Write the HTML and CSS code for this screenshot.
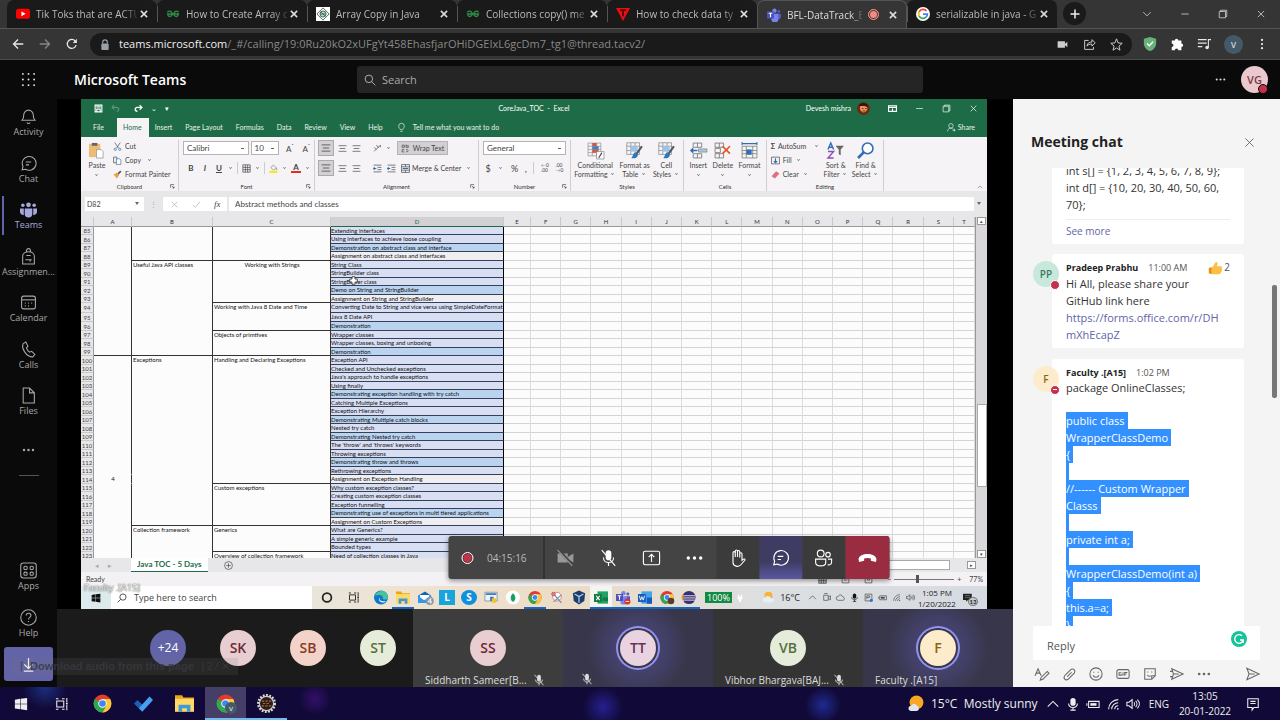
FILE: index.html
```html
<!DOCTYPE html>
<html lang="en">
<head>
<meta charset="utf-8">
<title>Microsoft Teams</title>
<link rel="stylesheet" href="styles.css">
</head>
<body>
<svg class="sprite" aria-hidden="true">
  <symbol id="x" viewBox="0 0 16 16"><path d="M3 3l10 10M13 3L3 13"/></symbol>
  <symbol id="chev" viewBox="0 0 16 16"><path d="M2 5l6 6 6-6"/></symbol>
  <symbol id="up" viewBox="0 0 16 16"><path d="M2 11l6-6 6 6"/></symbol>
  <symbol id="restore" viewBox="0 0 16 16"><path d="M2 4h10v10H2zM4 4V2h10v10h-2"/></symbol>
  <symbol id="min" viewBox="0 0 16 16"><path d="M2 8h12"/></symbol>
  <symbol id="dots" viewBox="0 0 16 16"><g class="solid"><circle cx="2.500" cy="8" r="1.500"/><circle cx="8" cy="8" r="1.500"/><circle cx="13.500" cy="8" r="1.500"/></g></symbol>
  <symbol id="micoff" viewBox="0 0 16 16"><rect class="solid" x="5.500" y="1" width="5" height="9" rx="2.500"/><path d="M3.500 7.500c0 6 9 6 9 0M8 12v3M2 1l12 14"/></symbol>
  <symbol id="mic" viewBox="0 0 16 16"><rect class="solid" x="5" y="1" width="6" height="9" rx="3"/><path d="M3 7.500c0 6 10 6 10 0M8 12v3M5 15h6"/></symbol>
  <symbol id="chat" viewBox="0 0 16 16"><path d="M2 14l.8-3.200A6.500 6.500 0 1 1 5.200 13.400zM5.500 6.600h5M5.500 9.300h3"/></symbol>
  <symbol id="search" viewBox="0 0 16 16"><circle cx="6.500" cy="6.500" r="5"/><path d="M10.200 10.200L15 15"/></symbol>
  <symbol id="wifi" viewBox="0 0 16 16"><path d="M3 14C3 8 8 3 14 3M6.500 14c0-4 3.500-7.500 7.500-7.500M10 14c0-2.200 1.800-4 4-4"/><circle class="solid" cx="13.500" cy="13.500" r="1"/></symbol>
  <symbol id="speaker" viewBox="0 0 16 16"><path d="M1 6h2.500L7 3v10L3.500 10H1zM9 6c1 1 1 3 0 4M11 4.500c2 2 2 5 0 7M13 3c3 3 3 7 0 10"/></symbol>
  <symbol id="battery" viewBox="0 0 16 16"><path d="M3 5h12v7H3zM1 7v3"/><path class="solid" d="M5 7h7v3H5z"/></symbol>
  <symbol id="taskview" viewBox="0 0 16 16"><path d="M2 4.500h8v7H2zM1 2h3M1 14h3M8 2h3M8 14h3M13.500 1v5M13.500 9v6"/><path class="solid" d="M12.500 6.500h2v2h-2z"/></symbol>
  <symbol id="win" viewBox="0 0 16 16"><path class="solid" d="M1 3l6-.9v5.500H1zM7.600 2L15 1v6.600H7.600zM1 8.300h6v5.600L1 13zM7.600 8.300H15V15l-7.400-1z"/></symbol>
  <symbol id="chrome" viewBox="0 0 16 16"><circle cx="8" cy="8" r="7.500" fill="#e33b2e"/><path fill="#2da94f" d="M1.500 4.300A7.500 7.500 0 0 0 8 15.500l3.300-5.600z"/><path fill="#fcc934" d="M8 15.500a7.500 7.500 0 0 0 6.500-11.200H8l3.300 5.600z"/><circle cx="8" cy="8" r="3.600" fill="#fff"/><circle cx="8" cy="8" r="2.800" fill="#4285f4"/></symbol>
  <symbol id="folder" viewBox="0 0 16 16"><path fill="#e8a713" d="M0 1h6l1 2h9v3H0z"/><path fill="#ffd868" d="M0 4h16v11H0z"/><path fill="#3f9ad6" d="M3 9h10v6h-3v-3H6v3H3z"/></symbol>
  <symbol id="teams" viewBox="0 0 16 16"><circle cx="8.500" cy="3" r="2.500" fill="#7b83eb"/><circle cx="13.500" cy="4" r="1.700" fill="#5059c9"/><path fill="#5059c9" d="M10 6.500h6v4a3 3 0 0 1-4 2z"/><path fill="#7b83eb" d="M5 6.500h8V12a4 4 0 0 1-8 1z"/><path fill="#4b53bc" d="M0 4h8v8H0z"/><path fill="#fff" d="M2 5.500h4v1.200H4.600v4H3.400v-4H2z"/></symbol>
  <symbol id="gfg" viewBox="0 0 16 8"><path d="M1 4h14M1.500 2C4-.5 7 1 7 4s-4 4-5 1M14.500 2C12-.5 9 1 9 4s4 4 5 1" fill="none" stroke="#2f8d46" stroke-width="1.600"/></symbol>
  <symbol id="grid" viewBox="0 0 16 16"><path d="M1.500 1.500h13v13h-13zM1.500 6h13M1.500 10h13M6 1.500v13M10 1.500v13"/></symbol>
  <symbol id="lines" viewBox="0 0 16 16"><path d="M1 3h14M3 8h10M1 13h14"/></symbol>
  <symbol id="indent" viewBox="0 0 16 16"><path d="M1 2h14M8 6h7M8 10h7M1 14h14"/><path stroke="#2f6db5" stroke-width="2" d="M6 8H1M3 6L1 8l2 2"/></symbol>
  <symbol id="launch" viewBox="0 0 16 16"><path stroke-width="2" d="M2 12V2h11M7 7l6 6M13 8v5H8"/></symbol>
  <symbol id="brush" viewBox="0 0 16 16"><path d="M.7 .7h12v11h-12zM.7 4h12M.7 8h12M4.500 .7v11M8.500 .7v11" fill="none" stroke="#8a8a8a" stroke-width=".7"/><path fill="#9cc3e8" d="M4 4h7v5H4z"/><path d="M15 4l-5 7" stroke="#555" stroke-width="2"/><path fill="#2878c4" d="M10 10c-3-1-3 3-5 5 4 1 7-1 6-4z"/></symbol>
</svg>

<div class="tabs">
  <div class="tab"><svg class="fav" viewBox="0 0 16 16"><rect y="2" width="16" height="11.500" rx="3" fill="#f00"/><path d="M6.200 5v5.500L11 7.800z" fill="#fff"/></svg><span>Tik Toks that are ACTU</span><button aria-label="Close"><svg class="i"><use href="#x"/></svg></button></div>
  <div class="tab"><svg class="fav"><use href="#gfg"/></svg><span>How to Create Array c</span><button aria-label="Close"><svg class="i"><use href="#x"/></svg></button></div>
  <div class="tab"><svg class="fav" viewBox="0 0 16 16"><path d="M0 0h16v16H0z" fill="#fff"/><path d="M8 1l7 7-7 7-7-7z" fill="none" stroke="#36584a"/><circle cx="8" cy="8" r="3.500" fill="#b7d6bd" stroke="#36584a"/><path d="M5 8h6M6 6l4 4" stroke="#36584a"/></svg><span>Array Copy in Java</span><button aria-label="Close"><svg class="i"><use href="#x"/></svg></button></div>
  <div class="tab"><svg class="fav"><use href="#gfg"/></svg><span>Collections copy() me</span><button aria-label="Close"><svg class="i"><use href="#x"/></svg></button></div>
  <div class="tab"><svg class="fav" viewBox="0 0 16 16"><path d="M0 1h16L8 16z" fill="#f20d0d"/><path d="M4.500 3.500h7M8 3.500v7" stroke="#4a0000" stroke-width="2"/></svg><span>How to check data ty</span><button aria-label="Close"><svg class="i"><use href="#x"/></svg></button></div>
  <div class="tab on"><svg class="fav"><use href="#teams"/></svg><span>BFL-DataTrack_B</span><i class="live"></i><button aria-label="Close"><svg class="i"><use href="#x"/></svg></button></div>
  <div class="tab"><svg class="fav" viewBox="0 0 16 16"><circle cx="8" cy="8" r="8" fill="#fff"/><g fill="none" stroke-width="2"><path d="M12 4.600A5 5 0 0 0 3.600 5.600" stroke="#ea4335"/><path d="M3.600 5.600a5 5 0 0 0 0 4.800" stroke="#fbbc05"/><path d="M3.600 10.400a5 5 0 0 0 7.800 1.200" stroke="#34a853"/><path d="M8 8h5a5 5 0 0 1-1.600 3.600" stroke="#4285f4"/></g></svg><span>serializable in java - G</span><button aria-label="Close"><svg class="i"><use href="#x"/></svg></button></div>
  <button class="newtab" aria-label="New tab"><svg class="i" viewBox="0 0 16 16"><path d="M8 2v12M2 8h12"/></svg></button>
  <div class="winctl"><button aria-label="Tabs"><svg class="i"><use href="#chev"/></svg></button><button aria-label="Minimize"><svg class="i"><use href="#min"/></svg></button><button aria-label="Restore"><svg class="i"><use href="#restore"/></svg></button><button aria-label="Close window"><svg class="i"><use href="#x"/></svg></button></div>
</div>

<div class="toolbar">
  <div class="navbtns">
    <button aria-label="Back"><svg class="i" viewBox="0 0 16 16"><path d="M15 8H2M8 2L2 8l6 6"/></svg></button>
    <button class="dim" aria-label="Forward"><svg class="i" viewBox="0 0 16 16"><path d="M1 8h13M8 2l6 6-6 6"/></svg></button>
    <button aria-label="Reload"><svg class="i" viewBox="0 0 16 16"><path d="M13.500 9.500A6 6 0 1 1 12.300 4"/><path class="solid" d="M14.500 1v5.500H9z"/></svg></button>
  </div>
  <div class="url">
    <svg class="lock" viewBox="0 0 10 12"><path d="M2.500 5V3.500a2.500 2.500 0 0 1 5 0V5" fill="none" stroke="#9aa0a6" stroke-width="1.300"/><rect x="1" y="5" width="8" height="7" rx="1" fill="#9aa0a6"/></svg>
    <p><b>teams.microsoft.com</b>/_#/calling/19:0Ru20kO2xUFgYt458EhasfjarOHiDGEIxL6gcDm7_tg1@thread.tacv2/</p>
    <svg class="i" viewBox="0 0 16 16"><path class="solid" d="M2 4h9v3l3-2.500v7L11 9v3H2z"/></svg>
    <svg class="i" viewBox="0 0 16 16"><path d="M7 3H2v11h11v-3M5 10c0-4 3-5 6-5V2l4 4-4 4V7.500C8 7.500 6 8 5 10z"/></svg>
    <svg class="i" viewBox="0 0 16 16"><path d="M8 1l2 5 5 .5-4 3.500 1.300 5L8 12.300 3.700 15 5 10 1 6.500 6 6z"/></svg>
  </div>
  <div class="ext">
    <svg viewBox="0 0 16 16"><path d="M8 0l7 2v5c0 5-4 8-7 9-3-1-7-4-7-9V2z" fill="#67b279"/><path d="M4.500 7.500L7.200 10l4.300-4.500" fill="none" stroke="#fff" stroke-width="1.500"/></svg>
    <svg viewBox="0 0 16 16"><path d="M2 4h3.500a2 2 0 1 1 4 0H13v3.500a2 2 0 1 1 0 4V15H9.500a2 2 0 1 0-4 0H2v-3.500a2 2 0 1 0 0-4z" fill="#fff"/></svg>
    <svg class="i" viewBox="0 0 16 16"><path d="M1 3h10M1 7h10M1 11h5M13 12V3h3"/><circle class="solid" cx="11.500" cy="12" r="2"/></svg>
    <span class="prof">v</span>
    <svg class="i vert"><use href="#dots"/></svg>
  </div>
</div>

<header class="thead">
  <svg class="waffle" viewBox="0 0 16 16"><g fill="#e6e6e6"><circle cx="2" cy="2" r="1"/><circle cx="8" cy="2" r="1"/><circle cx="14" cy="2" r="1"/><circle cx="2" cy="8" r="1"/><circle cx="8" cy="8" r="1"/><circle cx="14" cy="8" r="1"/><circle cx="2" cy="14" r="1"/><circle cx="8" cy="14" r="1"/><circle cx="14" cy="14" r="1"/></g></svg>
  <h1>Microsoft Teams</h1>
  <label class="tsearch"><svg class="i"><use href="#search"/></svg><input type="text" placeholder="Search" aria-label="Search"></label>
  <div class="me"><svg class="i"><use href="#dots"/></svg><span class="av">VG<i></i></span></div>
</header>

<main>
  <nav class="rail">
    <div class="items">
      <a href="#"><svg class="i" viewBox="0 0 16 16"><path d="M2 11.500c1-1 1.500-2 1.500-5a4.500 4.500 0 0 1 9 0c0 3 .5 4 1.500 5zM6.500 13.500c.5 1.500 2.500 1.500 3 0"/></svg>Activity</a>
      <a href="#"><svg class="i"><use href="#chat"/></svg>Chat</a>
      <a href="#" class="cur"><svg viewBox="0 0 18 16"><g fill="#a6a7dc"><circle cx="3" cy="3.500" r="1.900"/><circle cx="9" cy="3" r="2.500"/><circle cx="15" cy="3.500" r="1.900"/><path d="M5 7h8v5.500a4 4 0 0 1-8 0zM0 7h4v7c-2 0-4-1-4-3.500zM14 7h4v3.500c0 2.500-2 3.500-4 3.500z"/></g></svg>Teams</a>
      <a href="#"><svg class="i" viewBox="0 0 16 16"><path d="M2.500 15V8c0-6 11-6 11 0v7zM6 3.500c0-4 4-4 4 0M5 11h6M9.500 11v2M6 7h4"/></svg>Assignmen...</a>
      <a href="#"><svg class="i" viewBox="0 0 16 16"><rect x="1.500" y="2" width="13" height="12" rx="2"/><path d="M1.500 5.500h13"/><g class="solid"><circle cx="5" cy="8.500" r=".6"/><circle cx="8" cy="8.500" r=".6"/><circle cx="11" cy="8.500" r=".6"/><circle cx="5" cy="11.200" r=".6"/><circle cx="8" cy="11.200" r=".6"/></g></svg>Calendar</a>
      <a href="#"><svg class="i" viewBox="0 0 16 16"><path d="M3 2.500L5.500 1l2 4L6 6.500c.5 1.500 1.500 3 3 4l2-.8 3 3-2 2.300C6 15 1 7 3 2.500z"/></svg>Calls</a>
      <a href="#"><svg class="i" viewBox="0 0 16 16"><path d="M3 1h6l4.500 4.500V15H3zM9 1v4.500h4.500"/></svg>Files</a>
    </div>
    <button class="more" aria-label="More"><svg class="i"><use href="#dots"/></svg></button>
    <hr>
    <div class="items low">
      <a href="#"><svg class="i" viewBox="0 0 16 16"><rect x=".7" y="1" width="14.600" height="14" rx="2.500"/><rect x="3.700" y="4" width="3" height="3" rx="1"/><rect x="9.500" y="4" width="3" height="3" rx="1"/><rect x="3.700" y="9.500" width="3" height="3" rx="1"/><rect x="9.500" y="9.500" width="3" height="3" rx="1"/></svg>Apps</a>
      <a href="#"><svg class="i" viewBox="0 0 16 16"><circle cx="8" cy="8" r="7.300"/><path d="M5.800 6.200c0-3.200 4.600-2.800 4.500 0C10.200 8 8 7.800 8 9.800M8 11.200v1"/></svg>Help</a>
    </div>
    <button class="dl" aria-label="Download"><svg class="i" viewBox="0 0 16 16"><path d="M8 1v11M3.500 8L8 12.300 12.500 8M3 15h10"/></svg></button>
  </nav>

  <div class="area">
    <section class="stage">
      <div class="share">
        <div class="xl">
          <div class="xtitle">
            <div class="qa"><svg class="i" viewBox="0 0 16 16"><path stroke-width="2" d="M2 2h12v12H2zM5 14V9h6v5M4 5h8"/></svg><svg class="i faint" viewBox="0 0 16 16"><path stroke-width="2" d="M2 6h8c5 0 5 7 0 7M5 2L2 6l4 4"/></svg><svg class="i" viewBox="0 0 16 16"><path stroke-width="2.500" d="M14 6H6c-5 0-5 7 0 7M10 2l4 4-4 4"/></svg><span>⌄</span><span>▾</span></div>
            <span>CoreJava_TOC&nbsp; -&nbsp; Excel</span>
            <div class="xr"><span>Devesh mishra</span><svg class="face" viewBox="0 0 16 16"><circle cx="8" cy="8" r="8" fill="#6b2a12"/><path d="M4 5c3-2 8-1 9 3-1 4-4 6-7 4-2-1-3-4-2-7z" fill="#e8935a"/><path d="M2 5c2-5 10-5 12 1L9 5z" fill="#2c1810"/><path d="M6 8h2M10 8h2M7 11h3" stroke="#57200d"/></svg><svg class="i" viewBox="0 0 16 16"><path stroke-width="2" d="M1 3h14v10H1zM1 6h14M8 12V8"/></svg><svg class="i"><use href="#min"/></svg><svg class="i"><use href="#restore"/></svg><svg class="i"><use href="#x"/></svg></div>
          </div>
          <div class="xmenu">
            <button>File</button><button class="on">Home</button><button>Insert</button><button>Page Layout</button><button>Formulas</button><button>Data</button><button>Review</button><button>View</button><button>Help</button>
            <svg class="i bulb" viewBox="0 0 16 16"><path d="M6 12c0-2-3-3-3-6.500a5 5 0 0 1 10 0C13 9 10 10 10 12zM6 15h4"/></svg><span>Tell me what you want to do</span>
            <button class="sh"><svg class="i" viewBox="0 0 16 16"><circle cx="7" cy="5" r="4"/><path d="M1 15c0-7 9-7 10-3M10 13h5M13 10v5"/></svg>Share</button>
          </div>
          <div class="ribbon">
            <div class="grp clip"><div class="gb">
              <div class="big"><svg viewBox="0 0 16 18"><path fill="#ecbc74" d="M0 2h12v14H0z"/><path fill="#666" d="M3 1h6v3H3z"/><path fill="#fff" stroke="#888" stroke-width=".7" d="M8 8h5l2 2v7H8z"/></svg>Paste<em></em></div>
              <div class="col"><span><svg class="i" viewBox="0 0 16 16"><path d="M3 1l7 10M13 1L6 11"/><g stroke="#2f6db5"><circle cx="4" cy="13" r="2"/><circle cx="12" cy="13" r="2"/></g></svg>Cut</span><span><svg class="i" viewBox="0 0 16 16"><path d="M1 2h6v10H1z"/><path fill="#fff" stroke="#2f6db5" d="M6 5h6l2 2v8H6z"/></svg>Copy&nbsp; <em></em></span><span><svg viewBox="0 0 16 16"><path fill="#e8a33d" d="M1 8l6-3 4 4-4 6z"/><path d="M9 7l5-5" stroke="#555" stroke-width="3"/></svg>Format Painter</span></div>
            </div><div class="gl">Clipboard<svg class="i"><use href="#launch"/></svg></div></div>
            <div class="grp fnt"><div class="gb two">
              <div class="row"><select class="w67" aria-label="Font"><option>Calibri</option></select><select class="w29" aria-label="Font size"><option>10</option></select><b class="fs">A<sup>ˆ</sup></b><b class="fs">A<sup>ˇ</sup></b></div>
              <div class="row wide"><b>B</b><b class="it">I</b><b class="un">U</b><em></em><hr><svg class="i"><use href="#grid"/></svg><em></em><hr><svg viewBox="0 0 16 16"><path d="M3 6l5-4 5 5-5 4z" fill="none" stroke="#666"/><path d="M13 7c2 3 1 4 0 4" stroke="#2f6db5" fill="none"/><path fill="#f8e71c" d="M1 12h14v4H1z"/></svg><em></em><b class="fc">A</b><em></em></div>
            </div><div class="gl">Font<svg class="i"><use href="#launch"/></svg></div></div>
            <div class="grp aln"><div class="gb two">
              <div class="row"><svg class="i box"><use href="#lines"/></svg><svg class="i"><use href="#lines"/></svg><svg class="i"><use href="#lines"/></svg><svg class="i sp" viewBox="0 0 16 16"><path d="M2 13L13 2M13 2v4M2 6l4 4M6 2l4 5"/></svg><em></em><button class="wrap"><svg class="i" viewBox="0 0 16 16"><path d="M2 2h4v4H2zM9 1v5h4V3H9M6 10H2v4h4M9 14c5 0 5-5 0-4"/></svg>Wrap Text</button></div>
              <div class="row"><svg class="i box"><use href="#lines"/></svg><svg class="i"><use href="#lines"/></svg><svg class="i"><use href="#lines"/></svg><svg class="i sp2"><use href="#indent"/></svg><svg class="i"><use href="#indent"/></svg><span class="mrg"><svg class="i" viewBox="0 0 16 16"><path d="M1 1h14v14H1zM1 5h14M1 11h14M8 1v4M8 11v4"/><path stroke="#2f6db5" stroke-width="2" d="M3 8h10"/></svg>Merge &amp; Center&nbsp; <em></em></span></div>
            </div><div class="gl">Alignment<svg class="i"><use href="#launch"/></svg></div></div>
            <div class="grp num"><div class="gb two">
              <div class="row"><select class="w83" aria-label="Number format"><option>General</option></select></div>
              <div class="row nums"><b>$</b><em></em><b>%</b><b>,</b><hr><small><i>←</i>0<br>.00</small><small>.00<br><i>→</i>0</small></div>
            </div><div class="gl">Number<svg class="i"><use href="#launch"/></svg></div></div>
            <div class="grp sty"><div class="gb">
              <div class="big"><svg viewBox="0 0 16 16"><path d="M1 1h12v12H1zM1 4h12M1 7h12M1 10h12M5 1v12M9 1v12" fill="none" stroke="#888" stroke-width=".6"/><path fill="#d9553f" d="M5 1h4v3H5zM5 7h6v3H5z"/><path fill="#3f7fc1" d="M5 4h6v3H5z"/><path fill="#fff" stroke="#777" stroke-width=".6" d="M9 9h7v7H9z"/><path d="M14 10l-3 5" stroke="#444"/></svg>Conditional<span>Formatting <em></em></span></div>
              <div class="big"><svg viewBox="0 0 16 16"><use href="#brush"/></svg>Format as<span>Table <em></em></span></div>
              <div class="big"><svg viewBox="0 0 16 16"><use href="#brush"/></svg>Cell<span>Styles <em></em></span></div>
            </div><div class="gl">Styles</div></div>
            <div class="grp cel"><div class="gb">
              <div class="big"><svg viewBox="0 0 16 16"><path d="M3 1h8v4H3zM3 11h8v4H3zM7 1v4M7 11v4" fill="none" stroke="#777" stroke-width=".8"/><path fill="#a8c8e8" stroke="#777" stroke-width=".6" d="M8 6.500h8v3H8z"/><path d="M7 8H1M3 6L1 8l2 2" stroke="#2f6db5" stroke-width="1.500" fill="none"/></svg>Insert<em></em></div>
              <div class="big"><svg viewBox="0 0 16 16"><path d="M1 1h8v4H1zM1 6h5v4H1zM1 11h8v4H1zM5 1v4M5 11v4" fill="none" stroke="#777" stroke-width=".8"/><path d="M8 4l7 7M15 4l-7 7" stroke="#e0542c" stroke-width="1.600"/></svg>Delete<em></em></div>
              <div class="big"><svg viewBox="0 0 16 16"><path d="M1 4h14v11H1zM1 8h14M1 11h14M5 4v11M11 4v11" fill="none" stroke="#777" stroke-width=".7"/><path d="M1 0v3M1 1.500h14M15 0v3" stroke="#2f6db5"/><path fill="#2f6db5" d="M5 7h5v5H5z"/></svg>Format<em></em></div>
            </div><div class="gl">Cells</div></div>
            <div class="grp edt"><div class="gb">
              <div class="col"><span><b>Σ</b>AutoSum&nbsp;&nbsp; <em></em></span><span><svg class="i" viewBox="0 0 16 16"><path d="M1 2h14v12H1z"/><path stroke="#2f6db5" stroke-width="2" d="M8 4v8M5 9l3 3 3-3"/></svg>Fill <em></em></span><span><svg viewBox="0 0 16 16"><path fill="#e0707c" d="M1 11l8-9 6 4-8 9z"/></svg>Clear <em></em></span></div>
              <div class="big"><svg viewBox="0 0 18 18"><path d="M1 8l3-7 3 7M2 5.500h4" stroke="#2f6db5" stroke-width="1.500" fill="none"/><path d="M1 10h6l-6 7h6" stroke="#8a4fb8" stroke-width="1.500" fill="none"/><path fill="#666" d="M9 4h9l-3.500 4v6l-2-1V8z"/></svg>Sort &amp;<span>Filter <em></em></span></div>
              <div class="big"><svg viewBox="0 0 16 16"><circle cx="10" cy="6" r="5" fill="#fff" stroke="#2f6db5" stroke-width="1.500"/><path d="M6.500 9.500L1 15" stroke="#2f6db5" stroke-width="2.500"/></svg>Find &amp;<span>Select <em></em></span></div>
            </div><div class="gl">Editing</div></div>
            <svg class="i collapse"><use href="#up"/></svg>
          </div>
          <div class="fbar">
            <div class="nbox">D82<em class="tri"></em></div><span class="vd">⋮</span>
            <div class="fx"><svg class="i"><use href="#x"/></svg><svg class="i" viewBox="0 0 16 16"><path d="M2 9l4 4 8-10"/></svg><i>fx</i></div>
            <input type="text" value="Abstract methods and classes" aria-label="Formula"><em class="tri"></em>
          </div>
          <div class="sheet">
            <table><colgroup id="cols"></colgroup><thead id="head"></thead><tbody id="rows"></tbody></table>
            <div class="vs"><i class="arrow">▴</i><i class="thumb"></i><i class="arrow">▾</i></div>
            <svg class="cursor" viewBox="0 0 12 12"><path d="M4 1h4v3h3v4H8v3H4V8H1V4h3z" fill="#fff" stroke="#222"/></svg>
          </div>
          <div class="stabs"><span class="ar">◂</span><span class="ar">▸</span><button>Java TOC - 5 Days</button><svg class="i" viewBox="0 0 16 16"><circle cx="8" cy="8" r="7"/><path d="M8 4v8M4 8h8"/></svg><div class="hs"></div><i class="arrow">▸</i></div>
          <div class="status"><span>Ready</span><svg class="i gsel"><use href="#grid"/></svg><svg class="i" viewBox="0 0 16 16"><path d="M2 2h12v12H2zM5 6h6M5 9h6"/></svg><svg class="i" viewBox="0 0 16 16"><path d="M2 2h12v12H2zM6 2v7h4V2"/></svg><div class="zm"><span>−</span><input type="range" value="38" aria-label="Zoom"><span>+</span></div><span class="pc">77%</span></div>
        </div>
        <div class="wbar">
          <button class="st" aria-label="Start"><svg class="i"><use href="#win"/></svg></button>
          <label><svg class="i flip"><use href="#search"/></svg><input type="text" placeholder="Type here to search" aria-label="Type here to search"></label>
          <div class="apps">
            <svg class="i" viewBox="0 0 16 16"><circle cx="8" cy="8" r="5" stroke-width="2"/></svg>
            <svg class="i wider"><use href="#taskview"/></svg>
            <svg viewBox="0 0 16 16"><circle cx="8" cy="8" r="8" fill="#1476c8"/><path fill="#45c4a0" d="M1 6c3-8 14-7 15 1 0 4-5 4-6 2 1-4-5-5-9-3z"/><path fill="#d9edf5" d="M6 8c0 4 4 5 8 4-3 4-10 1-8-4z"/></svg>
            <svg class="run"><use href="#folder"/></svg>
            <svg viewBox="0 0 16 16"><path fill="#1066b5" d="M0 6l8-5 7 5v8H0z"/><path fill="#fff" d="M2 5h11v5l-5 2-6-3z"/><path fill="#2f9ae8" d="M0 6l7 5 8-5v8H0z"/><circle cx="13.500" cy="12" r="4.500" fill="#8a9aa5"/><path d="M14.500 15V9l-3 4h4.500" fill="none" stroke="#fff"/></svg>
            <i class="sq">L</i>
            <i class="sq rd">S</i>
            <svg viewBox="0 0 16 16"><path fill="#eef3f7" stroke="#7d97b0" d="M1 2h14v10H1z"/><path fill="#3e78b4" d="M2 3h12v2H2zM7 7h4v5H7z"/><path fill="#f2c431" d="M9 9h5v5H9z"/></svg>
            <svg viewBox="0 0 16 16"><circle cx="8" cy="8" r="8" fill="#fff"/><path fill="#16a05d" d="M8 3c4 4 3 8 0 10C5 11 4 7 8 3z"/></svg>
            <svg class="run"><use href="#chrome"/></svg>
            <svg viewBox="0 0 16 16"><circle cx="8" cy="7" r="5" fill="#fff" stroke="#d87a72"/><path d="M3 3l10 11M13 5L4 13" stroke="#7c92ad" stroke-width="1.500"/><circle cx="4" cy="4" r="2" fill="none" stroke="#d33"/></svg>
            <svg viewBox="0 0 16 16"><path fill="#1d3d6d" d="M8 0l7 3-1 9-6 4-6-4-1-9z"/><path d="M3 4l5 3 5-3M8 7v7" stroke="#a9c5e6" stroke-width="1.500" fill="none"/></svg>
            <svg class="run hot" viewBox="0 0 16 16"><path fill="#21a366" d="M4 1h12v14H4z"/><path fill="#107c41" d="M0 4h9v9H0zM10 8h6v4h-6z"/><path d="M2.500 6l4 5M6.500 6l-4 5" stroke="#fff" stroke-width="1.300"/></svg>
            <svg class="run" viewBox="0 0 16 16"><use href="#teams"/><circle cx="13" cy="12.500" r="3.500" fill="#d13438"/><path d="M11 12.500h4" stroke="#fff"/></svg>
            <svg class="run" viewBox="0 0 16 16"><path fill="#41a5ee" d="M4 1h12v14H4z"/><path fill="#185abd" d="M0 4h9v9H0zM10 8h6v7h-6z"/><path d="M1.500 6L3 11l1.500-4L6 11l1.500-5" stroke="#fff" fill="none"/></svg>
            <svg class="run" viewBox="0 0 16 16"><use href="#chrome"/><circle cx="12.500" cy="12" r="3.800" fill="#5b3c2c"/></svg>
            <svg class="run" viewBox="0 0 16 16"><circle cx="8" cy="8" r="7.500" fill="#3a2f74"/><path d="M1 6h14M1 8.500h14M1 11h14" stroke="#eee"/><path d="M1 5a8 8 0 0 0 0 6" stroke="#f7941e" stroke-width="2" fill="none"/></svg>
          </div>
          <span class="bat">100%</span>
          <svg viewBox="0 0 16 16" class="plug"><path fill="#fff" d="M4 1h2v4h4V1h2v4h1v4l-3 3v4H6v-4L3 9V5h1z"/></svg>
          <svg viewBox="0 0 16 16" class="sun"><circle cx="8" cy="6" r="5" fill="#f9b233"/><path fill="#e4eef7" d="M4 14a3 3 0 0 1 0-6c2-3 6-2 7 1 5-1 5 5 1 5z"/></svg>
          <span class="deg">16°C</span>
          <div class="tray"><svg class="i"><use href="#up"/></svg><svg class="i" viewBox="0 0 16 16"><path d="M3 4h8v9H3zM11 7l4-2v7l-4-2M4 1h6"/></svg><svg class="i" viewBox="0 0 16 16"><path d="M4 13a3 3 0 0 1 0-7c2-4 7-3 8 1 4 0 4 6 0 6z"/></svg><svg class="i dk"><use href="#mic"/></svg><svg class="i" viewBox="0 0 16 16"><path d="M2 2h12v12H2zM5 11V5h5v3H5"/><circle cx="13" cy="13" r="3" fill="#2c78d4" stroke="none"/></svg><svg class="i"><use href="#battery"/></svg><svg class="i"><use href="#wifi"/></svg><svg class="i"><use href="#speaker"/></svg></div>
          <span class="clk">1:05 PM<br>1/20/2022</span>
          <span class="note"><svg viewBox="0 0 16 16"><path fill="#222" d="M0 1h14v10H8l-3 3v-3H0z"/><path d="M3 4h8M3 7h8" stroke="#888"/></svg><b>13</b></span>
        </div>
        <span class="presenter">Faculty .[A15]</span>
      </div>
      <div class="strip">
        <div class="rest"><span class="pa more24">+24</span><span class="pa sk">SK</span><span class="pa sb">SB</span><span class="pa stt">ST</span></div>
        <div class="tile t1"><span class="pa sk">SS</span><p>Siddharth Sameer[B...<svg class="i"><use href="#micoff"/></svg></p></div>
        <div class="tile talk"><span class="pa tt">TT</span><p class="only"><svg class="i"><use href="#micoff"/></svg></p></div>
        <div class="tile"><span class="pa stt">VB</span><p>Vibhor Bhargava[BAJ...<svg class="i"><use href="#micoff"/></svg></p></div>
        <div class="tile talk"><span class="pa ff">F</span><p>Faculty .[A15]</p></div>
      </div>
    </section>

    <aside class="chat">
      <div class="ch"><h2>Meeting chat</h2><button aria-label="Close chat"><svg class="i"><use href="#x"/></svg></button></div>
      <div class="msgs">
        <article class="first"><p>int s[] = {1, 2, 3, 4, 5, 6, 7, 8, 9};<br>int d[] = {10, 20, 30, 40, 50, 60, 70};</p><a class="see" href="#">See more</a></article>
        <article><span class="ca pp">PP<i></i></span><h3>Pradeep Prabhu <time>11:00 AM</time><span class="like"><svg viewBox="0 0 16 16"><path fill="#fbbf45" d="M1 8l4-1 4-6c3 0 2 3 1 5h5c2 1 1 8-2 9H6l-5-1z"/><path fill="#e08f20" d="M1 8l3-1v8l-3-1z"/></svg>2</span></h3><p>Hi All, please share your<br>GitHub link here<br><a href="#">https://forms.office.com/r/DH<wbr>mXhEcapZ</a></p></article>
        <article><span class="ca fa">F<i></i></span><h3>Faculty .[A15] <time>1:02 PM</time></h3><p class="pk">package OnlineClasses;<br>&nbsp;</p>
          <p class="code"><mark>public class</mark><br><mark>WrapperClassDemo</mark><br><mark>{</mark><br><mark></mark><br><mark>//------ Custom Wrapper</mark><br><mark>Classs</mark><br><mark></mark><br><mark>private int a;</mark><br><mark></mark><br><mark>WrapperClassDemo(int a)</mark><br><mark>{</mark><br><mark>this.a=a;</mark><br><mark>}</mark></p></article>
        <i class="bar"></i>
      </div>
      <label class="reply"><input type="text" placeholder="Reply" aria-label="Reply"><svg viewBox="0 0 16 16"><circle cx="8" cy="8" r="8" fill="#15c39a"/><path d="M11 4.800A4.300 4.300 0 1 0 12.200 9H9M12.200 9v3" fill="none" stroke="#fff" stroke-width="1.400"/></svg></label>
      <div class="tools">
        <svg class="i" viewBox="0 0 16 16"><path d="M0 10L3.500 2 7 10M1.300 7h4M6 15l1-3 7-7 2 2-7 7z"/></svg>
        <svg class="i" viewBox="0 0 16 16"><path d="M4 9l6-6c3-2 6 1 4 4l-7 7c-3 2-6-1-4-4l6-6M6 11l5-5"/></svg>
        <svg class="i" viewBox="0 0 16 16"><circle cx="8" cy="8" r="7"/><path d="M4.500 9.500c1.500 3 5.500 3 7 0M5.500 5.500v1.200M10.500 5.500v1.200"/></svg>
        <svg class="i" viewBox="0 0 16 16"><rect x="1" y="3" width="14" height="10" rx="2"/><path d="M6 6.500H3.500v3H6V8M8 6v4M10 10V6.300h3M10 8h2"/></svg>
        <svg class="i" viewBox="0 0 16 16"><path d="M2 2h12v8l-4 4H2zM14 10h-4v4M5 9c1 2 3 2 4 1M5.500 5v1.200M10 5v1.200"/></svg>
        <svg class="i" viewBox="0 0 16 16"><path d="M2 2l13 6-13 6 2-6zM4 8h6M0 5h3M0 11h3"/></svg>
        <svg class="i"><use href="#dots"/></svg>
        <button aria-label="Send"><svg class="i" viewBox="0 0 16 16"><path d="M1 1.500L15 8 1 14.500 3.500 8zM3.500 8H10"/></svg></button>
      </div>
    </aside>

    <div class="ctl">
      <div class="rec"><i></i><time>04:15:16</time></div>
      <button class="cam" aria-label="Camera"><svg class="i" viewBox="0 0 16 16"><path class="solid" d="M1 4h9v3l5-3v8l-5-3v3H1z"/><path stroke="#444" stroke-width="2.500" d="M2 1l13 14"/><path d="M1 1l13 14"/></svg></button>
      <button aria-label="Microphone"><svg class="i"><use href="#micoff"/></svg></button>
      <button aria-label="Share"><svg class="i" viewBox="0 0 16 16"><rect x=".8" y="2" width="14.400" height="12" rx="1.500"/><path d="M8 11.500V5M5.500 7.200L8 4.700l2.500 2.500"/></svg></button>
      <button aria-label="More actions"><svg class="i"><use href="#dots"/></svg></button>
      <button class="dk" aria-label="Raise hand"><svg class="i" viewBox="0 0 16 16"><path d="M4 9V3.500c0-1.500 2-1.500 2 0V7 2c0-1.500 2-1.500 2 0v5-4.500c0-1.500 2-1.500 2 0V7.500v-3c0-1.500 2-1.500 2 0V10c2-2 3-1 2.500 0L11 14c-2 2.500-7 1.500-7-2z"/></svg></button>
      <button class="sel" aria-label="Chat"><svg class="i"><use href="#chat"/></svg></button>
      <button class="dk" aria-label="People"><svg class="i" viewBox="0 0 16 16"><circle cx="5.500" cy="4" r="3"/><circle cx="12" cy="5" r="2"/><path d="M1 9h9v3c0 4-9 4-9 0zM12 9h3.200v2.500c0 2-1.500 3-3.500 2.500"/></svg></button>
      <button class="end" aria-label="Leave"><svg viewBox="0 0 16 16"><path fill="#fff" d="M0 9c1-6 15-6 16 0l-.5 2.500L11 10.500V8.500c-1.500-.7-4.500-.7-6 0v2L.5 11.500z"/></svg></button>
    </div>
  </div>
  <div class="ghost"><span>⌈</span><b>Download audio from this page</b><span>⌋ 2 ⁄ ✕</span></div>
</main>

<footer>
  <button aria-label="Start"><svg class="i"><use href="#win"/></svg></button>
  <button aria-label="Task view"><svg class="i"><use href="#taskview"/></svg></button>
  <button aria-label="Chrome"><svg class="lg"><use href="#chrome"/></svg></button>
  <button aria-label="To Do"><svg class="lg" viewBox="0 0 16 16"><path fill="#1d5fb8" d="M0 8l3-3 4 4-3 3z"/><path fill="#47a0ef" d="M4 12L13 2l3 3-9 10z"/></svg></button>
  <button aria-label="Files"><svg class="lg"><use href="#folder"/></svg></button>
  <button class="act" aria-label="Chrome window"><svg class="lg"><use href="#chrome"/></svg><span>v</span></button>
  <button class="run" aria-label="Eclipse"><svg class="lg" viewBox="0 0 16 16"><circle cx="8" cy="8" r="7" fill="#2a1d1a" stroke="#ddd" stroke-width="2" stroke-dasharray="1.500 1.200"/><circle cx="8" cy="8" r="6" fill="#2a1d1a" stroke="#ccc"/><path d="M4 6h8M4 10h8M5 8h6" stroke="#a8643c" stroke-dasharray="2 1"/></svg></button>
  <div class="ft">
    <svg class="sunny" viewBox="0 0 16 16"><circle cx="8" cy="7" r="6.500" fill="#f9a825"/><path fill="#dfe8f2" d="M3 15a2.500 2.500 0 0 1 0-5c1-2 5-2 5 0 3 0 3 5 0 5z"/></svg><span class="wx">15°C&nbsp; Mostly sunny</span>
    <svg class="i"><use href="#up"/></svg><svg class="i"><use href="#mic"/></svg><svg class="i"><use href="#battery"/></svg><svg class="i"><use href="#wifi"/></svg><svg class="i"><use href="#speaker"/></svg>
    <span class="eng">ENG</span><span class="fclk">13:05<br>20-01-2022</span>
    <svg class="i nt" viewBox="0 0 16 16"><path d="M2 2h12v10H9l-2 3v-3H2zM5 5h6M5 7.500h6"/></svg>
  </div>
</footer>
<script src="script.js"></script>
</body>
</html>
```

FILE: styles.css
```css
* { box-sizing: border-box; margin: 0; padding: 0; }
html, body { height: 100%; }
body { display: flex; flex-direction: column; overflow: hidden; background: #0a0a0a; color: #ddd; font: 11px/16px "Open Sans", "Noto Sans", sans-serif; }
button { background: none; border: 0; color: inherit; font: inherit; display: flex; align-items: center; justify-content: center; }
input, select { font: inherit; color: inherit; border: 0; background: none; outline: 0; min-width: 0; }
a { color: inherit; text-decoration: none; }
svg { flex: none; width: 14px; height: 14px; overflow: visible; }
i, em { font-style: normal; }
.sprite { position: absolute; width: 0; height: 0; }
.i { fill: none; stroke: currentColor; stroke-width: 1.2; }
.solid { fill: currentColor; stroke: none; }

/* browser tabs */
.tabs { flex: none; display: flex; align-items: stretch; height: 28px; padding-left: 7px; background: #353535; }
.tab { flex: 0 1 150px; min-width: 0; display: flex; align-items: center; gap: 6px; padding: 0 8px 0 9px; background: #1a1a1a; border-radius: 7px 7px 0 0; color: #bbb; position: relative; font-size: 10px; }
.tab + .tab:not(.on)::before { content: ""; width: 1px; height: 16px; background: #555; position: absolute; left: 0; top: 6px; }
.tab.on { background: #353535; border: 1px solid #555; border-bottom: 0; color: #ddd; }
.tab span { flex: 1; min-width: 0; white-space: nowrap; mask-image: linear-gradient(90deg, #000 85%, rgba(0, 0, 0, .2)); }
.tab button { margin-left: -4px; }
.tab button svg { width: 10px; height: 10px; stroke-width: 2.5; color: #ddd; }
.live { flex: none; width: 11px; height: 11px; margin-right: 7px; border-radius: 50%; border: 1px solid #f28b82; background: #f28b82; box-shadow: inset 0 0 0 1px #353535; }
.newtab { width: 23px; height: 23px; margin: 2px 0 0 6px; border-radius: 50%; background: #1a1a1a; color: #eee; }
.newtab svg { width: 12px; height: 12px; stroke-width: 2; }
.winctl { display: flex; margin-left: auto; }
.winctl button { width: 38px; }
.winctl svg { width: 10px; height: 10px; }

.toolbar { flex: none; display: flex; align-items: center; height: 32px; border-top: 1px solid #555; border-bottom: 1px solid #4a4a4a; background: #353535; }
.navbtns { display: flex; gap: 15px; width: 90px; padding-left: 12px; color: #e8e8e8; }
.navbtns svg { width: 12px; height: 12px; stroke-width: 1.7; }
.navbtns .dim { color: #888; }
.url { flex: 1; min-width: 0; display: flex; align-items: center; height: 23px; border-radius: 12px; background: #1a1a1a; padding: 0 9px 0 10px; gap: 14px; color: #ccc; }
.url p { flex: 1; overflow: hidden; white-space: nowrap; color: #888; }
.url b { font-weight: 400; color: #eee; }
.url .lock { width: 10px; height: 11px; margin-right: -5px; }
.url .i { width: 13px; height: 13px; }
.ext { display: flex; align-items: center; gap: 13px; padding: 0 12px 0 11px; color: #e8e8e8; }
.ext .vert { width: 12px; height: 12px; transform: rotate(90deg); }
.prof { width: 19px; height: 19px; border-radius: 50%; background: #455a68; font-size: 10px; line-height: 18px; text-align: center; }

/* teams header */
.thead { flex: none; display: flex; align-items: center; height: 39px; padding: 0 12px 0 21px; }
.waffle { width: 15px; height: 15px; }
.thead h1 { width: 283px; margin-left: 38px; color: #fff; font-size: 14px; font-weight: 600; }
.tsearch { flex: 0 1 566px; display: flex; align-items: center; gap: 6px; height: 27px; padding: 0 7px; background: #252525; border-radius: 3px; color: #bbb; }
.tsearch svg { width: 12px; height: 12px; }
.tsearch input { flex: 1; }
.tsearch input::placeholder { color: #aaa; }
.me { display: flex; align-items: center; gap: 15px; margin-left: auto; }
.me svg { width: 11px; height: 11px; }
.av { position: relative; width: 27px; height: 27px; border-radius: 50%; background: #e9c9cd; color: #7a3a44; font-weight: 600; line-height: 27px; text-align: center; }
.av i { position: absolute; right: 0; bottom: -1px; width: 10px; height: 10px; border-radius: 50%; background: #c4314b; border: 1px solid #0a0a0a; }

main { flex: 1; min-height: 0; display: flex; position: relative; }
.rail { flex: none; width: 57px; display: flex; flex-direction: column; align-items: center; color: #a8a8a8; font-size: 9px; line-height: 14px; background: #0a0a0a; }
.items { width: 57px; height: 326px; display: grid; grid-template-columns: minmax(0, 1fr); grid-auto-rows: 1fr; }
.items a { display: flex; flex-direction: column; align-items: center; padding-top: 9px; position: relative; }
.items svg { width: 17px; height: 17px; stroke-width: 1; }
.items .cur { color: #a6a7dc; }
.cur::before { content: ""; position: absolute; left: 2px; top: 4px; width: 2px; height: 39px; background: #6264a7; }
.more { margin-top: 18px; }
.more svg { width: 13px; }
.rail hr { width: 20px; border: 0; border-top: 1px solid #555; margin-top: 18px; }
.items.low { height: 94px; margin-top: auto; }
.dl { width: 49px; height: 34px; margin: 0 0 6px; background: #6264a7; border-radius: 3px; color: #fff; }
.dl svg { width: 15px; height: 15px; stroke-width: 1.3; }
.ghost { position: absolute; left: 12px; bottom: 12px; display: flex; gap: 6px; padding: 0 8px; height: 17px; background: rgba(120, 120, 120, .14); color: rgba(56, 56, 64, .85); font: 11px/17px "Liberation Sans", sans-serif; z-index: 3; }

/* meeting area */
.area { flex: 1; min-width: 0; display: flex; position: relative; }
.stage { flex: 1; min-width: 0; display: flex; flex-direction: column; background: #000; }
.share { flex: 1; min-height: 0; margin: 0 26px 0 24px; display: flex; flex-direction: column; position: relative; background: #e7e6e8; color: #444; font: 7px/9px "Lato", "Open Sans", sans-serif; }
.xl { flex: 1; min-height: 0; display: flex; flex-direction: column; }
.xl em { display: inline-block; width: 3px; height: 3px; border: solid #777; border-width: 0 1px 1px 0; transform: rotate(45deg) scale(.7); margin: 0 2px 2px; flex: none; }
.xl em.tri { width: 0; height: 0; border: 2px solid transparent; border-top: 3px solid #666; transform: none; margin: 0 3px; }
.xl svg { width: 9px; height: 9px; }
.xtitle { flex: none; display: grid; grid-template-columns: 1fr auto 1fr; align-items: center; height: 19px; background: #1e6c47; color: #fff; }
.qa { display: flex; gap: 8px; padding-left: 13px; align-items: center; }
.qa .faint { color: #5d967a; margin-right: 6px; }
.xr { display: flex; justify-content: flex-end; align-items: center; gap: 18px; padding-right: 9px; }
.xr span { margin-right: -12px; }
.xr .face { width: 13px; height: 13px; }
.xmenu { flex: none; display: flex; align-items: stretch; height: 19px; background: #1e6c47; color: #e8f2ec; padding-left: 6px; }
.xmenu button { padding: 0 7px 0 6px; }
.xmenu .on { background: #f5f3f5; color: #1e6c47; margin: 0 0 0 6px; }
.xmenu span { align-self: center; }
.xmenu .bulb { align-self: center; margin: 0 7px; }
.xmenu .sh { margin-left: auto; padding-right: 12px; gap: 2px; }
.ribbon { flex: none; display: flex; height: 54px; background: #f5f3f5; position: relative; }
.grp { display: flex; flex-direction: column; border-right: 1px solid #d0ced0; margin: 3px 0 0; }
.clip { width: 98px; } .fnt { width: 136px; } .aln { width: 164px; } .num { width: 92px; } .sty { width: 113px; } .cel { width: 83px; } .edt { width: 117px; }
.gb { flex: 1; display: flex; justify-content: space-evenly; }
.gb.two { flex-direction: column; padding: 0 4px; justify-content: flex-start; gap: 4px; }
.gl { position: relative; text-align: center; font-size: 6px; line-height: 9px; color: #333; }
.gl svg { position: absolute; right: 3px; top: 2px; width: 5px; height: 5px; }
.big { display: flex; flex-direction: column; align-items: center; }
.big svg { width: 17px; height: 17px; margin-top: 2px; margin-bottom: 2px; }
.big em { margin-top: 3px; }
.big span em { margin-top: 0; }
.col { display: flex; flex-direction: column; justify-content: space-around; padding-bottom: 1px; }
.col span { display: flex; align-items: center; gap: 3px; height: 12px; }
.row { display: flex; align-items: center; gap: 4px; height: 16px; }
.row hr { border: 0; border-left: 1px solid #ccc; height: 12px; }
.row.wide { gap: 4px; padding-left: 3px; }
.row.wide b { width: 10px; text-align: center; font-size: 8px; }
.row.wide em { margin: 0 1px 2px; }
.it { font-style: italic; } .un { text-decoration: underline; }
.row.wide .fc { border-bottom: 2px solid #e0301e; line-height: 8px; }
.row select { height: 14px; margin-right: -2px; background: #fff; border: 1px solid #b5b3b5; appearance: none; padding: 0 3px; font-size: 8px; line-height: 12px; background-image: linear-gradient(#666, #666); background-size: 3px 1px; background-position: right 4px center; background-repeat: no-repeat; }
.w67 { width: 67px; } .w29 { width: 29px; } .w83 { width: 83px; }
.fs { font-weight: 400; font-size: 8px; margin-left: 5px; }
.fs sup { font-size: 5px; }
.row .box { padding: 2px; width: 14px; height: 14px; background: #d2d0d2; outline: 1px solid #aaa; }
.aln .row { gap: 5px; }
.row .sp { margin-left: 7px; }
.row .sp2 { margin-left: 7px; }
.row .sp + em { margin-left: 0; }
.wrap { width: 51px; height: 14px; background: #d2d0d2; border: 1px solid #b5b3b5; gap: 3px; white-space: nowrap; }
.mrg { display: flex; align-items: center; gap: 2px; white-space: nowrap; }
.nums { justify-content: space-evenly; }
.nums b { font-weight: 400; font-size: 9px; }
.nums small { font-size: 5px; line-height: 5px; }
.nums small i { color: #2f6db5; }
.collapse { position: absolute; right: 4px; bottom: 1px; }
.ribbon .collapse { width: 6px; height: 6px; }
.fbar { flex: none; display: flex; align-items: center; height: 26px; padding: 0 3px 0 4px; font-size: 7px; }
.fbar > div, .fbar input { height: 14px; background: #fff; }
.nbox { width: 59px; display: flex; align-items: center; justify-content: space-between; padding: 0 2px; }
.vd { width: 19px; text-align: center; color: #999; }
.fx { width: 64px; display: flex; align-items: center; justify-content: space-around; color: #aaa; }
.fx i { font-family: "Liberation Serif", serif; font-style: italic; font-size: 9px; color: #444; }
.fbar input { flex: 1; margin-left: 2px; padding-left: 6px; font-size: 8px; }
.fbar > .tri { margin-left: -9px; }

.sheet { flex: 1; min-height: 0; display: flex; position: relative; overflow: hidden; }
table { flex: 1; min-width: 0; width: 100%; table-layout: fixed; border-collapse: separate; border-spacing: 0; align-self: flex-start; background: #fdfcfd; }
.c-num { width: 13px; } .c-a { width: 38px; } .c-b { width: 81px; } .c-c { width: 118px; } .c-d { width: 173px; } .c-e { width: 27px; } .c-t { width: 21px; }
thead th { height: 10px; background: #e7e6e8; border-right: 1px solid #c9c7c9; border-bottom: 1px solid #999; font: 6px/9px "Lato", sans-serif; color: #333; }
thead .h-d { background: #d2d0d2; border-bottom-color: #1e6c47; color: #1e6c47; }
tbody th { background: #e7e6e8; border-right: 1px solid #999; border-bottom: 1px solid #c9c7c9; font: 6px/7px "Lato", sans-serif; color: #444; }
tbody td { border-right: 1px solid #dddbdd; border-bottom: 1px solid #d5d3d5; font-size: 6px; line-height: 7px; white-space: nowrap; vertical-align: top; color: #111; }
tbody tr { height: 8px; }
tbody tr:nth-child(even) { height: 9px; }
tbody tr:nth-child(10) { height: 10px; }
tbody tr:nth-child(11) { height: 9px; }
tbody td.m { border-color: #333; padding-left: 1px; }
tbody td.open { border-bottom-color: transparent; }
tbody td.ctr { text-align: center; }
tbody td.d { background: #d9dff3; border-bottom-color: #35405c; border-right: 1px solid #000; }
tbody td.demo { background: #bad4ef; }
tbody td.asg { background: #efeef1; }
.vs { flex: none; width: 12px; display: flex; flex-direction: column; align-items: center; background: #d9d7d9; border-left: 1px solid #999; }
.arrow { width: 9px; height: 8px; background: #fff; border: 1px solid #999; font-size: 5px; line-height: 6px; text-align: center; }
.vs .thumb { width: 10px; height: 83px; margin: 179px 0 auto; background: #fff; border: 1px solid #aaa; }
.cursor { position: absolute; left: 268px; top: 59px; }
.stabs { flex: none; display: flex; align-items: center; height: 14px; padding-right: 11px; background: #e7e6e8; }
.stabs .ar { width: 13px; text-align: center; color: #aaa; }
.stabs .ar:first-child { margin-left: 9px; }
.stabs button { align-self: stretch; margin: 0 16px 0 15px; padding: 0 6px; background: #fff; color: #1e6c47; font-weight: 700; font-size: 8px; border-bottom: 1px solid #1e6c47; }
.hs { margin-left: auto; width: 400px; height: 10px; margin-right: 17px; background: #fff; border: 1px solid #aaa; }
.status { flex: none; display: flex; align-items: center; height: 14px; padding: 0 4px 0 5px; background: #f3f1f3; gap: 14px; }
.status > span:first-child { margin-right: auto; }
.gsel { background: #cfcdcf; }
.zm { display: flex; align-items: center; gap: 3px; }
.zm input { appearance: none; width: 60px; height: 1px; background: #777; }
.zm input::-webkit-slider-thumb { appearance: none; width: 3px; height: 8px; background: #555; }
.pc { margin-left: -6px; }

.wbar { flex: none; display: flex; align-items: center; height: 23px; background: linear-gradient(90deg, #dcebee 0, #eee3d3 35%, #ecdcc6 55%, #dcdfe0 75%, #d6dbe2); color: #222; }
.wbar .st { width: 30px; color: #111; }
.wbar .st svg { width: 10px; height: 10px; }
.wbar label { flex: none; width: 201px; height: 23px; display: flex; align-items: center; gap: 7px; padding-left: 6px; background: #fff; font: 9px/12px "Open Sans", sans-serif; }
.wbar label svg { width: 10px; height: 10px; }
.flip { transform: scaleX(-1); }
.wbar input::placeholder { color: #444; }
.apps { display: flex; align-items: center; gap: 0; padding-left: 4px; }
.apps > * { box-sizing: border-box; width: 22px; height: 23px; padding: 4px 4px; }
.apps .wider { margin: 0 5px; padding: 5px; }
.apps .run { box-shadow: inset 0 -2px #1467c0; }
.apps .hot { background: #f6f4f0; }
.apps .sq { width: 16px; height: 15px; padding: 0; margin: 0 3px; background: #19a5dc; color: #fff; font: 700 10px/15px "Open Sans", sans-serif; text-align: center; }
.apps .rd { border-radius: 50%; background: #0f8fe0; }
.bat { margin-left: 5px; padding: 0 2px; background: #128a44; color: #fff; font-size: 9px; line-height: 11px; font-family: "Open Sans", sans-serif; }
.plug { width: 8px; height: 8px; margin-left: 4px; }
.wbar .sun { margin-left: auto; width: 13px; height: 13px; }
.deg { margin-left: 5px; font: 9px/12px "Open Sans", sans-serif; }
.tray { display: flex; gap: 5px; margin-left: 8px; color: #444; }
.tray svg { width: 9px; height: 9px; }
.tray .dk { color: #111; }
.clk { width: 44px; text-align: center; font: 8px/11px "Open Sans", sans-serif; }
.note { position: relative; margin: 0 14px 0 4px; }
.note svg { display: block; width: 10px; height: 10px; }
.note b { position: absolute; left: 5px; top: 4px; width: 10px; height: 9px; border-radius: 50%; background: #c7ccd1; border: 1px solid #777; font-size: 6px; line-height: 7px; text-align: center; }
.presenter { position: absolute; left: 3px; bottom: 15px; color: #eee; text-shadow: 0 0 1px #555, 0 0 2px #777; font: 9px/12px "Open Sans", sans-serif; }

.strip { flex: none; display: flex; height: 78px; background: #1b1b1b; overflow: hidden; }
.rest { flex: 1; display: flex; align-items: center; justify-content: flex-end; gap: 34px; padding-right: 17px; }
.pa { flex: none; width: 36px; height: 36px; border-radius: 50%; font-size: 14px; line-height: 36px; font-weight: 600; text-align: center; }
.more24 { background: #6264a7; color: #fff; font-size: 12px; font-weight: 400; }
.sk { background: #e8cdd1; color: #6b2a35; } .sb { background: #f2d2c9; color: #8a3a22; } .stt { background: #e5ecd9; color: #55703d; } .tt { background: #ead3e0; color: #63315a; } .ff { background: #fdeccb; color: #8a6410; }
.tile { width: 150px; display: flex; flex-direction: column; align-items: center; gap: 7px; padding: 21px 18px 0 12px; background: #343434; font-size: 10px; line-height: 14px; }
.tile > .pa { margin-left: 6px; }
.tile.t1 { background: #3d3d3d; }
.tile p { align-self: stretch; display: flex; justify-content: space-between; align-items: center; white-space: nowrap; }
.tile p svg { width: 12px; height: 12px; }
.tile.talk { background: radial-gradient(circle at 50% 50%, #5d5b98 0, #454370 25%, #38364a 60%); }
.talk .pa { box-shadow: 0 0 0 2px #38364a, 0 0 0 4px #9294f0; }
.tile .only { padding-left: 6px; }

/* meeting chat */
.chat { flex: none; width: 267px; display: flex; flex-direction: column; background: #f4f4f4; color: #333; }
.ch { display: flex; align-items: center; justify-content: space-between; height: 69px; padding: 17px 24px 0 18px; }
.ch h2 { font-size: 14px; font-weight: 700; color: #222; }
.ch svg { width: 13px; height: 13px; stroke-width: 1; color: #555; }
.msgs { flex: 1; min-height: 0; overflow: hidden; position: relative; padding: 0 36px 0 39px; }
article { position: relative; background: #fff; border-radius: 3px; padding: 6px 14px 5px; margin-bottom: 11px; }
article p { font-size: 11px; line-height: 17px; }
article.first { margin-top: -6px; padding: 0 14px 4px; margin-bottom: 10px; }
article a { color: #6264a7; }
.see { display: block; margin-top: 6px; padding: 3px 0 1px; border-top: 1px solid #eee; font-size: 10px; line-height: 16px; }
article h3 { display: flex; align-items: center; gap: 10px; font-size: 9px; line-height: 15px; font-weight: 700; color: #222; white-space: nowrap; }
article time, .like { font-weight: 400; color: #555; }
.like { display: flex; align-items: center; gap: 2px; margin-left: auto; font-size: 10px; }
.ca { position: absolute; left: -19px; top: 7px; width: 26px; height: 26px; border-radius: 50%; font-size: 10px; font-weight: 600; line-height: 26px; text-align: center; }
.ca i { position: absolute; right: -1px; bottom: -3px; width: 10px; height: 10px; border-radius: 50%; background: #c4314b; border: 1px solid #fff; }
.pp { background: #c9e8dc; color: #3b7a5f; } .fa { background: #fdeccb; color: #8a6410; }
.fa i::after { content: ""; position: absolute; left: 2px; top: 3px; width: 4px; height: 1px; background: #fff; }
article .pk { line-height: 16px; }
mark { background: #3390ff; color: #fff; padding: 1px 3px 1px 0; }
.bar { position: absolute; right: 3px; top: 117px; width: 5px; height: 113px; border-radius: 2px; background: #777; }
.reply { flex: none; display: flex; align-items: flex-start; height: 34px; margin: 0 20px 0 20px; padding: 5px 13px 5px 14px; background: #fff; border-radius: 2px; }
.reply input { flex: 1; height: 28px; font-size: 11px; }
.reply input::placeholder { color: #555; }
.reply svg { width: 16px; height: 16px; }
.tools { flex: none; display: flex; align-items: center; gap: 13px; height: 27px; padding: 0 20px 0 22px; color: #666; }
.tools button { margin-left: auto; }

/* call controls */
.ctl { position: absolute; left: 50%; bottom: 108px; transform: translateX(-50%); display: flex; height: 43px; border-radius: 3px; overflow: hidden; background: #444; color: #fff; box-shadow: 0 2px 5px rgba(0, 0, 0, .4); }
.rec { width: 96px; display: flex; align-items: center; gap: 14px; padding-left: 13px; border-right: 1px solid #222; }
.rec i { width: 12px; height: 12px; border-radius: 50%; background: #c4314b; border: 1px solid #fff; box-shadow: inset 0 0 0 1px #444; }
.rec time { color: #bbb; font-size: 10px; }
.ctl button { width: 43px; }
.ctl svg { width: 18px; height: 18px; stroke-width: 1; }
.ctl .cam { color: #999; }
.ctl .dk { background: #3b3b3b; }
.ctl .sel { background: linear-gradient(#3e3c63, #3e3c63 60%, #5a58a0); }
.ctl .end { background: #9a2c42; width: 44px; }

footer { flex: none; display: flex; height: 33px; background: radial-gradient(circle at 45px 0, #1c2f80 0, transparent 22px), radial-gradient(circle at 315px 12px, #33106a 0, transparent 16px), radial-gradient(circle at 603px 20px, #26208f 0, transparent 20px), radial-gradient(circle at 823px 18px, #202a90 0, transparent 18px), #110a38; color: #eee; }
footer button { width: 41px; position: relative; }
footer .lg { width: 19px; height: 19px; }
footer .act { background: #453f68; box-shadow: inset 0 -2px #76b9ed; }
footer .run { box-shadow: inset 0 -2px #76b9ed; }
.act span { position: absolute; right: 9px; bottom: 6px; width: 12px; height: 12px; border-radius: 50%; background: #455a68; font-size: 8px; line-height: 11px; }
.ft { margin-left: auto; display: flex; align-items: center; gap: 6px; padding-right: 20px; font-size: 10px; }
.sunny { width: 17px; height: 17px; }
.wx { font-size: 12px; margin-right: 2px; }
.ft .eng { margin-left: 3px; }
.fclk { width: 60px; text-align: center; line-height: 15px; }
.nt { margin-left: 5px; }
```

FILE: script.js
```js
const topics = `Extending interfaces
Using interfaces to achieve loose coupling
Demonstration on abstract class and interface
Assignment on abstract class and interfaces
String Class
StringBuilder class
StringBuffer class
Demo on String and StringBuilder
Assignment on String and StringBuilder
Converting Date to String and vice versa using SimpleDateFormat
Java 8 Date API
Demonstration
Wrapper classes
Wrapper classes, boxing and unboxing
Demonstration
Exception API
Checked and Unchecked exceptions
Java's approach to handle exceptions
Using finally
Demonstrating exception handling with try catch
Catching Multiple Exceptions
Exception Hierarchy
Demonstrating Multiple catch blocks
Nested try catch
Demonstrating Nested try catch
The 'throw' and 'throws' keywords
Throwing exceptions
Demonstrating throw and throws
Rethrowing exceptions
Assignment on Exception Handling
Why custom exception classes?
Creating custom exception classes
Exception funnelling
Demonstrating use of exceptions in multi tiered applications
Assignment on Custom Exceptions
What are Generics?
A simple generic example
Bounded types
Need of collection classes in Java`.split("\n");

// row number -> [row span, text, extra class]
const merged = [
  { 85: [15, ""], 100: [14, "", "open"], 114: [1, "4", "open ctr"], 115: [9, "", "open"] },
  { 85: [4, ""], 89: [11, "Useful Java API classes"], 100: [20, "Exceptions"], 120: [4, "Collection framework", "open"] },
  { 85: [4, ""], 89: [5, "Working with Strings", "ctr"], 94: [3, "Working with Java 8 Date and Time"], 97: [3, "Objects of primtives"],
    100: [15, "Handling and Declaring Exceptions"], 115: [5, "Custom exceptions"], 120: [3, "Generics"], 123: [1, "Overview of collection framework", "open"] },
];

const letters = "ABCDEFGHIJKLMNOPQRST".split("");
document.getElementById("cols").innerHTML =
  '<col class="c-num">' + letters.map(l => `<col class="c-${l.toLowerCase()}">`).join("");
document.getElementById("head").innerHTML =
  "<tr><th></th>" + letters.map(l => `<th class="h-${l.toLowerCase()}">${l}</th>`).join("") + "</tr>";
document.getElementById("rows").innerHTML = topics.map((topic, i) => {
  const n = 85 + i;
  const left = merged.map(col => {
    const c = col[n];
    return c ? `<td class="m ${c[2] || ""}" rowspan="${c[0]}">${c[1]}</td>` : "";
  }).join("");
  const kind = /^Demo/.test(topic) ? "demo" : /^Assign/.test(topic) ? "asg" : "";
  return `<tr><th>${n}</th>${left}<td class="d ${kind}">${topic}</td>${"<td></td>".repeat(16)}</tr>`;
}).join("");
```
